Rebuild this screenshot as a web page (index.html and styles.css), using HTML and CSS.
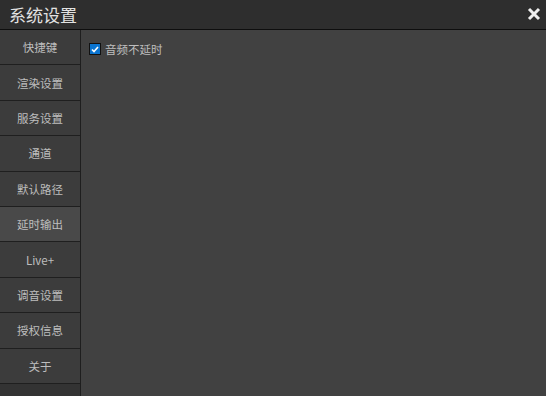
FILE: index.html
```html
<!DOCTYPE html>
<html lang="zh-CN">
<head>
    <meta charset="UTF-8">
    <title>系统设置</title>
    <link rel="stylesheet" href="styles.css">
</head>
<body>
    <div class="window">
        <div class="titlebar">
            <span class="title">系统设置</span>
            <svg class="close" width="14" height="14" viewBox="0 0 14 14">
                <path d="M2 2 L12 12 M12 2 L2 12" stroke="#f0f0f0" stroke-width="3"/>
            </svg>
        </div>
        <div class="body">
            <div class="sidebar">
                <div class="tab">快捷键</div>
                <div class="tab">渲染设置</div>
                <div class="tab">服务设置</div>
                <div class="tab">通道</div>
                <div class="tab">默认路径</div>
                <div class="tab active">延时输出</div>
                <div class="tab">Live+</div>
                <div class="tab">调音设置</div>
                <div class="tab">授权信息</div>
                <div class="tab">关于</div>
            </div>
            <div class="content">
                <label class="option">
                    <span class="check">
                        <svg width="8" height="7" viewBox="0 0 8 7"><path d="M1 3.5 L3 5.5 L7 1" stroke="#fff" stroke-width="1.6" fill="none"/></svg>
                    </span>
                    音频不延时
                </label>
            </div>
        </div>
    </div>
</body>
</html>
```

FILE: styles.css
```css
body {
    margin: 0;
    font-family: "Noto Sans CJK SC", "Liberation Sans", sans-serif;
    background: #2d2d2d;
}

.window {
    width: 546px;
    height: 396px;
    display: flex;
    flex-direction: column;
}

.titlebar {
    height: 29px;
    background: #2e2e2e;
    border-bottom: 1px solid #0e0e0e;
    display: flex;
    align-items: center;
    justify-content: space-between;
    padding: 0 5px 0 9px;
    flex-shrink: 0;
}

.title {
    color: #e2e2e2;
    font-size: 17px;
    line-height: 29px;
}

.close {
    margin-top: -1px;
}

.body {
    flex: 1;
    display: flex;
}

.sidebar {
    width: 80px;
    background: #333333;
    border-right: 1px solid #1e1e1e;
    display: flex;
    flex-direction: column;
}

.tab {
    height: 34.4px;
    border-bottom: 1px solid #1f1f1f;
    background: #3c3c3c;
    color: #bebebe;
    font-size: 11.5px;
    display: flex;
    align-items: center;
    justify-content: center;
}

.tab.active {
    background: #494949;
}

.content {
    flex: 1;
    background: #414141;
    padding: 12px 8px;
}

.option {
    display: flex;
    align-items: center;
    gap: 4px;
    color: #bebebe;
    font-size: 11.5px;
    height: 14px;
}

.check {
    width: 10px;
    height: 10px;
    background: #0a74d0;
    border: 1px solid #111;
    display: flex;
    align-items: center;
    justify-content: center;
}
```
